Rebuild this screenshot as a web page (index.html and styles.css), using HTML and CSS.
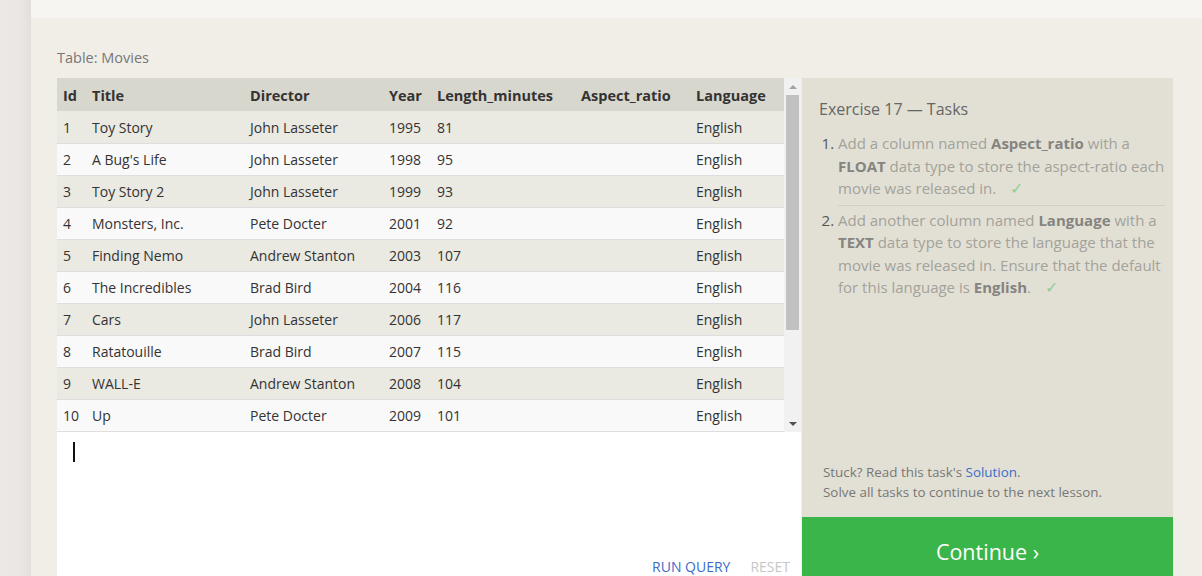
FILE: index.html
```html
<!DOCTYPE html>
<html>
<head>
<meta charset="utf-8">
<link rel="stylesheet" href="styles.css">
</head>
<body>
<div class="side"></div>
<div class="main">
  <div class="topband"></div>
  <div class="content">
    <div class="caption">Table: Movies</div>
    <div class="work">
      <div class="leftcol">
        <div class="tablebox">
          <table class="movies">
            <colgroup>
              <col style="width:29px"><col style="width:158px"><col style="width:139px"><col style="width:48px"><col style="width:144px"><col style="width:115px"><col style="width:94px">
            </colgroup>
            <thead>
              <tr><th>Id</th><th>Title</th><th>Director</th><th>Year</th><th>Length_minutes</th><th>Aspect_ratio</th><th>Language</th></tr>
            </thead>
            <tbody>
              <tr><td>1</td><td>Toy Story</td><td>John Lasseter</td><td>1995</td><td>81</td><td></td><td>English</td></tr>
              <tr><td>2</td><td>A Bug's Life</td><td>John Lasseter</td><td>1998</td><td>95</td><td></td><td>English</td></tr>
              <tr><td>3</td><td>Toy Story 2</td><td>John Lasseter</td><td>1999</td><td>93</td><td></td><td>English</td></tr>
              <tr><td>4</td><td>Monsters, Inc.</td><td>Pete Docter</td><td>2001</td><td>92</td><td></td><td>English</td></tr>
              <tr><td>5</td><td>Finding Nemo</td><td>Andrew Stanton</td><td>2003</td><td>107</td><td></td><td>English</td></tr>
              <tr><td>6</td><td>The Incredibles</td><td>Brad Bird</td><td>2004</td><td>116</td><td></td><td>English</td></tr>
              <tr><td>7</td><td>Cars</td><td>John Lasseter</td><td>2006</td><td>117</td><td></td><td>English</td></tr>
              <tr><td>8</td><td>Ratatouille</td><td>Brad Bird</td><td>2007</td><td>115</td><td></td><td>English</td></tr>
              <tr><td>9</td><td>WALL-E</td><td>Andrew Stanton</td><td>2008</td><td>104</td><td></td><td>English</td></tr>
              <tr><td>10</td><td>Up</td><td>Pete Docter</td><td>2009</td><td>101</td><td></td><td>English</td></tr>
            </tbody>
          </table>
          <div class="scrollbar">
            <div class="arrow up"></div>
            <div class="thumb"></div>
            <div class="arrow down"></div>
          </div>
        </div>
        <div class="editor">
          <div class="cursor"></div>
          <div class="actions">
            <span class="run">RUN QUERY</span>
            <span class="reset">RESET</span>
          </div>
        </div>
      </div>
      <div class="rightcol">
        <div class="tasks">
          <div class="tasks-title">Exercise 17 — Tasks</div>
          <ol class="task-list">
            <li>Add a column named <b>Aspect_ratio</b> with a <b>FLOAT</b> data type to store the aspect-ratio each movie was released in. <span class="check">✓</span></li>
            <li>Add another column named <b>Language</b> with a <b>TEXT</b> data type to store the language that the movie was released in. Ensure that the default for this language is <b>English</b>. <span class="check">✓</span></li>
          </ol>
          <div class="stuck">
            <div>Stuck? Read this task's <span class="link">Solution</span>.</div>
            <div>Solve all tasks to continue to the next lesson.</div>
          </div>
        </div>
        <div class="continue">Continue ›</div>
      </div>
    </div>
  </div>
</div>
</body>
</html>
```
FILE: styles.css
```css
html, body {
  margin: 0;
  padding: 0;
  height: 100%;
  overflow: hidden;
}
body {
  display: flex;
  background: #ebe8e5;
  font-family: "Open Sans", "Liberation Sans", sans-serif;
  color: #333;
}
.side {
  width: 31px;
  flex: none;
  background: linear-gradient(to right, #ebe8e5 0px, #e9e6e3 22px, #e2dfdb 31px);
}
.main {
  flex: 1;
  display: flex;
  flex-direction: column;
  min-width: 0;
}
.topband {
  height: 18px;
  background: #f7f5f1;
  flex: none;
}
.content {
  flex: 1;
  background: #f1eee8;
  padding: 0 29px 0 26px;
  display: flex;
  flex-direction: column;
}
.caption {
  font-size: 14.5px;
  color: #777;
  height: 60px;
  line-height: 20px;
  padding-top: 30px;
  box-sizing: border-box;
}
.work {
  display: flex;
  gap: 1px;
  flex: none;
  height: 498px;
  overflow: hidden;
}
.leftcol {
  width: 744px;
  flex: none;
  display: flex;
  flex-direction: column;
}
.tablebox {
  display: flex;
  height: 354px;
  flex: none;
  background: #f1f1f1;
}
.movies {
  width: 727px;
  table-layout: fixed;
  border-collapse: collapse;
  font-size: 14px;
  align-self: flex-start;
}
.movies th {
  background: #d8d7cd;
  font-weight: 700;
  font-size: 14.5px;
  text-align: left;
  height: 33px;
  padding: 1px 0 0 6px;
  box-sizing: border-box;
  color: #333;
  white-space: nowrap;
}
.movies td {
  height: 32px;
  padding: 1px 0 0 6px;
  box-sizing: border-box;
  border-bottom: 1px solid #dedede;
  color: #333;
  white-space: nowrap;
  overflow: hidden;
}
.movies tbody tr:nth-child(odd) td { background: #eae9e2; }
.movies tbody tr:nth-child(even) td { background: #f9f9f9; }
.scrollbar {
  width: 17px;
  flex: none;
  background: #f1f1f1;
  display: flex;
  flex-direction: column;
  align-items: center;
}
.arrow {
  height: 17px;
  width: 17px;
  display: flex;
  align-items: center;
  justify-content: center;
  flex: none;
}
.arrow.up::before {
  content: "";
  border-left: 4px solid transparent;
  border-right: 4px solid transparent;
  border-bottom: 4px solid #a3a3a3;
}
.arrow.down::before {
  content: "";
  border-left: 4px solid transparent;
  border-right: 4px solid transparent;
  border-top: 4px solid #505050;
}
.arrow.down { margin-top: auto; }
.thumb {
  width: 13px;
  height: 235px;
  background: #c1c1c1;
}
.editor {
  flex: 1;
  background: #fff;
  display: flex;
  flex-direction: column;
}
.cursor {
  width: 2px;
  height: 20px;
  background: #111;
  margin: 10px 0 0 16px;
}
.actions {
  margin-top: auto;
  display: flex;
  justify-content: flex-end;
  gap: 20px;
  padding-right: 11px;
  font-size: 14px;
  line-height: 20px;
  margin-bottom: -1px;
}
.run { color: #3b6dc7; }
.reset { color: #c6c6c6; }
.rightcol {
  width: 371px;
  flex: none;
  display: flex;
  flex-direction: column;
}
.tasks {
  background: #e2e0d5;
  height: 439px;
  flex: none;
  box-sizing: border-box;
  padding: 20px 4px 0 17px;
  display: flex;
  flex-direction: column;
}
.tasks-title {
  font-size: 16px;
  color: #666;
  line-height: 22px;
}
.task-list {
  margin: 12px 0 0 0;
  padding: 0 0 0 19px;
  font-size: 15px;
  line-height: 22.5px;
  color: #a3a29b;
}
.task-list li::marker {
  color: #555;
}
.task-list li + li {
  border-top: 1px solid #d2d0c5;
  margin-top: 5px;
  padding-top: 3px;
  margin-right: 4px;
}
.task-list b {
  color: #858480;
  font-weight: 700;
}
.check {
  color: #8fcf93;
  margin-left: 10px;
  font-size: 16px;
}
.stuck {
  margin-top: auto;
  margin-bottom: 15px;
  padding-left: 4px;
  font-size: 13.4px;
  line-height: 20px;
  color: #777;
}
.link { color: #3b6dc7; }
.continue {
  background: #3ab54a;
  color: #fff;
  font-size: 21.5px;
  text-align: center;
  height: 70px;
  flex: none;
  line-height: 70px;
}
```
